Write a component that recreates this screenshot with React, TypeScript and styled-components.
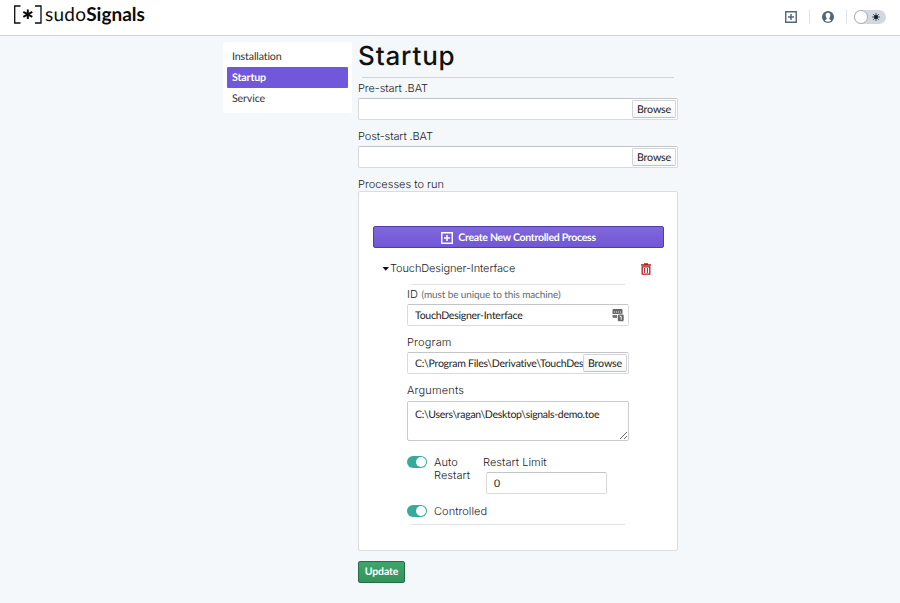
import React from "react";
import styled, { createGlobalStyle } from "styled-components";

const GlobalStyle = createGlobalStyle`
  *, *::before, *::after { box-sizing: border-box; }
  body {
    margin: 0;
    background: #f4f8fb;
    font-family: Lato, sans-serif;
    color: #222;
    text-rendering: geometricPrecision;
  }
  #root { height: 603px; overflow: hidden; }
  button, input, textarea { font-family: Lato, sans-serif; margin: 0; text-rendering: geometricPrecision; }
`;

const Header = styled.header`
  height: 36px;
  padding: 0 14px 0 12px;
  display: flex;
  justify-content: space-between;
  background: #fff;
  border-bottom: 1px solid #ced4d9;
`;

const Logo = styled.div`
  display: flex;
  padding-top: 4px;
  height: 30px;
  color: #0b0b0b;
`;

const LogoMark = styled.svg`
  width: 31px;
  height: 22px;
  margin-right: 2px;
`;

const LogoText = styled.span<{ $bold?: boolean }>`
  font-size: 19px;
  line-height: 21px;
  font-weight: ${(p) => (p.$bold ? 700 : 400)};
  letter-spacing: ${(p) => (p.$bold ? "0px" : "0.25px")};
`;

const Tools = styled.nav`
  display: flex;
  align-items: center;
  height: 34px;
`;

const Separator = styled.i`
  width: 1px;
  height: 14px;
  background: #dfe3e7;
`;

const ToolButton = styled.span`
  display: flex;
  margin: 0 12px;
`;

const ThemeSwitch = styled.div`
  width: 32px;
  height: 14px;
  margin-left: 7px;
  border-radius: 7px;
  background: #d3d8de;
  display: flex;
  align-items: center;
  justify-content: space-between;
  padding-right: 5px;
`;

const ThemeKnob = styled.span`
  width: 14px;
  height: 14px;
  border-radius: 50%;
  background: #fff;
  border: 1px solid #a7aeb6;
`;

const Page = styled.div`
  display: flex;
  align-items: flex-start;
  padding: 6px 0 0 223px;
`;

const Menu = styled.aside`
  width: 129px;
  height: 71px;
  padding: 4px;
  border-radius: 2px;
  background: #fff;
`;

const MenuItem = styled.a<{ $active?: boolean }>`
  display: block;
  height: 21px;
  padding-left: 5px;
  border-radius: 1px;
  font-size: 10.7px;
  line-height: 22px;
  letter-spacing: -0.15px;
  font-weight: ${(p) => (p.$active ? 700 : 400)};
  color: ${(p) => (p.$active ? "#fff" : "#333")};
  background: ${(p) => (p.$active ? "#7157d9" : "transparent")};
`;

const Main = styled.main`
  width: 320px;
  margin-left: 6px;
  display: flex;
  flex-direction: column;
`;

const Title = styled.h1`
  margin: 0;
  height: 35px;
  font: 500 26px/30px Inter, sans-serif;
  letter-spacing: 0.85px;
  color: #111;
`;

const Rule = styled.hr<{ $soft?: boolean }>`
  width: calc(100% - 8px);
  height: 1px;
  margin: 0 0 ${(p) => (p.$soft ? 3 : 4)}px 4px;
  border: 0;
  background: ${(p) => (p.$soft ? "#e2e3e4" : "#d2d6d9")};
`;

const Label = styled.label<{ $height?: number; $spacing?: number }>`
  display: block;
  height: ${(p) => p.$height ?? 16}px;
  font: 300 11px/13px Inter, sans-serif;
  letter-spacing: ${(p) => p.$spacing ?? 0.17}px;
  white-space: nowrap;
  color: #222;
`;

const Hint = styled.span`
  font: 400 10px/13px Lato, sans-serif;
  letter-spacing: -0.1px;
  color: #626b72;
`;

const Field = styled.div<{ $width?: number; $after?: number }>`
  display: flex;
  align-items: center;
  width: ${(p) => (p.$width ? `${p.$width}px` : "100%")};
  height: 22px;
  margin-bottom: ${(p) => p.$after ?? 0}px;
  padding-right: 1px;
  background: #fff;
  border: 1px solid #d8dadd;
  border-top-color: #c3c6c9;
  border-radius: 2px;
`;

const Input = styled.input`
  flex: 1;
  min-width: 0;
  height: 20px;
  padding: 1px 0 0 7px;
  border: 0;
  background: transparent;
  outline: 0;
  font-size: 10.5px;
  letter-spacing: -0.26px;
  color: #222;
`;

const Browse = styled.button`
  width: 44px;
  height: 18px;
  flex: none;
  padding: 1px 0 0;
  border: 1px solid #d2d4d8;
  border-bottom-color: #bfc2c7;
  border-radius: 2px;
  background: linear-gradient(#fff, #f5f6f8);
  font-size: 10.7px;
  line-height: 15px;
  letter-spacing: -0.15px;
  color: #222;
`;

const Panel = styled.section`
  width: 320px;
  height: 360px;
  padding: 34px 14px 0;
  background: #fff;
  border: 1px solid #d9dde0;
  border-radius: 2px;
`;

const CreateButton = styled.button`
  display: flex;
  align-items: center;
  justify-content: center;
  gap: 5px;
  width: 291px;
  height: 22px;
  padding: 1px 0 0;
  border: 1px solid #513ca8;
  border-radius: 2px;
  background: linear-gradient(#8068db, #7157d6);
  color: #fff;
  font-size: 10.5px;
  font-weight: 700;
  letter-spacing: -0.28px;
`;

const ProcessHead = styled.div`
  display: flex;
  align-items: center;
  height: 36px;
  padding: 5px 12px 0 9px;
`;

const ProcessName = styled.span`
  flex: 1;
  margin-bottom: 1px;
  font: 300 11px/13px Inter, sans-serif;
  letter-spacing: -0.1px;
  color: #222;
`;

const Process = styled.div`
  width: 222px;
  margin-left: 34px;
`;

const Arguments = styled.textarea`
  display: block;
  width: 222px;
  height: 40px;
  margin-bottom: 15px;
  padding: 6px 7px;
  border: 1px solid #c9cbce;
  border-radius: 2px;
  outline: 0;
  resize: both;
  background: #fff;
  font-size: 10.5px;
  line-height: 14px;
  letter-spacing: -0.3px;
  color: #222;
`;

const Options = styled.div<{ $height: number }>`
  display: flex;
  height: ${(p) => p.$height}px;
`;

const Toggle = styled.span`
  display: flex;
  justify-content: flex-end;
  flex: none;
  width: 20px;
  height: 12px;
  margin-right: 7px;
  padding: 1px;
  border-radius: 6px;
  background: #36ab9b;

  &::after {
    content: "";
    width: 10px;
    height: 10px;
    border-radius: 50%;
    background: #fff;
  }
`;

const OptionName = styled.span`
  width: 49px;
  font: 300 11px/13px Inter, sans-serif;
  letter-spacing: 0.05px;
  color: #222;
`;

const LimitGroup = styled.div`
  display: flex;
  flex-direction: column;
  ${Field} { margin-left: 3px; }
`;

const UpdateButton = styled.button`
  width: 47px;
  height: 22px;
  margin-top: 10px;
  padding: 0;
  border: 1px solid #236e44;
  border-radius: 2px;
  background: linear-gradient(#3fa66b, #33945b);
  color: #fff;
  font-size: 10.5px;
  font-weight: 700;
  line-height: 20px;
  letter-spacing: -0.15px;
`;

const PlusSquare = ({ color }: { color: string }) => (
  <svg width="12" height="12" viewBox="0 0 12 12" fill="none" stroke={color}>
    <path d="M.75.75h10.5v10.5H.75z" strokeWidth="1.4" />
    <path d="M6 3v6M3 6h6" strokeWidth="1.5" />
  </svg>
);

const Trash = () => (
  <svg width="10" height="12" viewBox="0 0 10 12" fill="none" stroke="#b51c22">
    <path d="M0 1.9h10M3 1h4" strokeWidth="1.5" />
    <path d="M1.2 3.8h7.6v7.4H1.2z" strokeWidth="1.3" />
    <path d="M3.6 5v5M6.4 5v5" strokeWidth="1" />
  </svg>
);

const PasswordManager = () => (
  <svg width="15" height="14" viewBox="0 0 15 14">
    <path d="M1.5 1h8q1 0 1 1v4H.5V2q0-1 1-1Z" fill="#666" />
    <path d="M2 4h7" stroke="#eee" strokeDasharray="1 1" />
    <path d="M.5 7H5v3H1.5q-1 0-1-1Z" fill="#777" />
    <rect x="5.5" y="6.2" width="6.5" height="7.3" rx="1.5" fill="#666" stroke="#fff" strokeWidth=".6" />
    <path d="M7.7 8.3h1.5v3.4" fill="none" stroke="#fff" />
  </svg>
);

const FileField = ({ value = "" }: { value?: string }) => (
  <Field $after={10}>
    <Input defaultValue={value} />
    <Browse>Browse</Browse>
  </Field>
);

export default function App() {
  return (
    <>
      <GlobalStyle />
      <Header>
        <Logo>
          <LogoMark viewBox="0 0 31 22" fill="none" stroke="#0b0b0b">
            <path d="M8.5 2H2.7v17h5.8M23 2h6v17h-6" strokeWidth="1.3" />
            <path d="M15.8 5.5v9.6M11.3 7.8l9 5M20.3 7.8l-9 5" strokeWidth="2" />
          </LogoMark>
          <LogoText>sudo</LogoText>
          <LogoText $bold>Signals</LogoText>
        </Logo>
        <Tools>
          <ToolButton><PlusSquare color="#526579" /></ToolButton>
          <Separator />
          <ToolButton>
            <svg width="12" height="12" viewBox="0 0 12 12">
              <circle cx="6" cy="6" r="6" fill="#526579" />
              <path d="M6 1.7c-1.7 0-2.5 1.2-2.3 3 .1 1 .4 1.7 1 2.2v1.2L2.8 9.6A4.7 4.7 0 0 0 6 10.8a4.7 4.7 0 0 0 3.2-1.2L7.3 8.1V6.9c.6-.5.9-1.2 1-2.2.2-1.8-.6-3-2.3-3Z" fill="#fff" />
            </svg>
          </ToolButton>
          <Separator />
          <ThemeSwitch>
            <ThemeKnob />
            <svg width="10" height="10" viewBox="0 0 10 10" stroke="#303b4b">
              <path d="M5 1v8M1 5h8M2 2l6 6M8 2 2 8" strokeWidth=".8" />
              <circle cx="5" cy="5" r="2" fill="#171b22" stroke="none" />
            </svg>
          </ThemeSwitch>
        </Tools>
      </Header>
      <Page>
        <Menu>
          <MenuItem>Installation</MenuItem>
          <MenuItem $active>Startup</MenuItem>
          <MenuItem>Service</MenuItem>
        </Menu>
        <Main>
          <Title>Startup</Title>
          <Rule />
          <Label $spacing={-0.1}>Pre-start .BAT</Label>
          <FileField />
          <Label $spacing={-0.1}>Post-start .BAT</Label>
          <FileField />
          <Label $height={13} $spacing={0}>Processes to run</Label>
          <Panel>
            <CreateButton><PlusSquare color="#fff" />Create New Controlled Process</CreateButton>
            <ProcessHead>
              <svg width="8" height="6" viewBox="0 0 8 6"><path d="M.5 1h6.5L3.8 4.8Z" fill="#111" /></svg>
              <ProcessName>TouchDesigner-Interface</ProcessName>
              <Trash />
            </ProcessHead>
            <Process>
              <Rule $soft />
              <Label>ID <Hint>(must be unique to this machine)</Hint></Label>
              <Field $after={10}>
                <Input defaultValue="TouchDesigner-Interface" />
                <PasswordManager />
              </Field>
              <Label>Program</Label>
              <FileField value="C:\Program Files\Derivative\TouchDesigner\bin" />
              <Label $height={17}>Arguments</Label>
              <Arguments defaultValue="C:\Users\ragan\Desktop\signals-demo.toe" />
              <Options $height={49}>
                <Toggle />
                <OptionName>Auto Restart</OptionName>
                <LimitGroup>
                  <Label $spacing={0.05}>Restart Limit</Label>
                  <Field $width={121}><Input defaultValue="0" /></Field>
                </LimitGroup>
              </Options>
              <Options $height={19}><Toggle /><OptionName>Controlled</OptionName></Options>
              <Rule $soft />
            </Process>
          </Panel>
          <UpdateButton>Update</UpdateButton>
        </Main>
      </Page>
    </>
  );
}
